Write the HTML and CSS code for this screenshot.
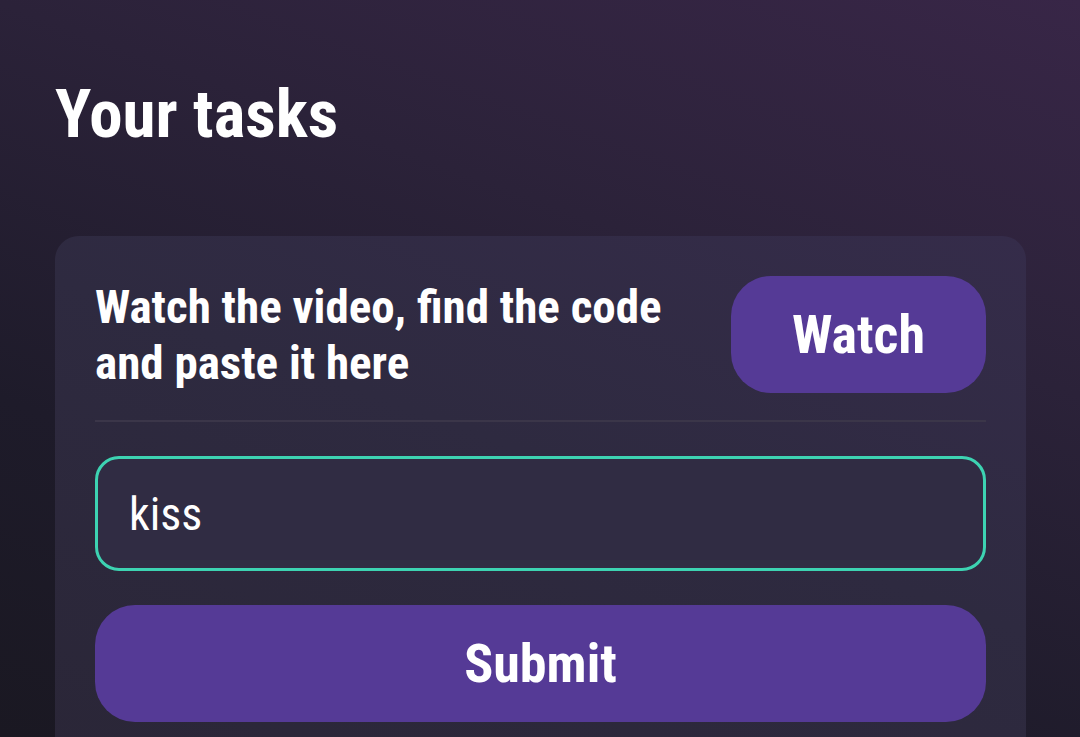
FILE: index.html
```html
<!DOCTYPE html>
<html lang="en">
  <head>
    <meta charset="UTF-8" />
    <meta name="viewport" content="width=device-width, initial-scale=1.0" />
    <title>Your tasks</title>
    <link rel="stylesheet" href="styles.css">
  </head>

  <body>
    <div class="page">
      <h1 class="page-title">Your tasks</h1>
      <div class="task-card">
        <div class="task-head">
          <div class="task-text">Watch the video, find the code and paste it here</div>
          <button class="btn watch-btn">Watch</button>
        </div>
        <div class="divider"></div>
        <input class="code-input" type="text" value="kiss" />
        <button class="btn submit-btn">Submit</button>
      </div>
    </div>
  </body>
</html>
```
FILE: styles.css
```css
html,
body {
  margin: 0;
  height: 100%;
}
body {
  font-family: "Roboto Condensed", Roboto, sans-serif;
  color: #ffffff;
  background: #1d1a28;
  background-image: linear-gradient(200deg, #382647 0%, #2b2239 35%, #1e1b2a 70%, #1a1822 100%);
  overflow: hidden;
}
.page {
  padding: 71px 54px 0 55px;
}
.page-title {
  margin: 0 0 79px 0;
  font-size: 67px;
  line-height: 86px;
  font-weight: 700;
}
.task-card {
  background: linear-gradient(200deg, #352c4a 0%, #2e2a40 45%, #2a2637 100%);
  border-radius: 24px;
  padding: 40px;
  display: flex;
  flex-direction: column;
}
.task-head {
  display: flex;
  align-items: center;
  justify-content: space-between;
}
.task-text {
  width: 600px;
  font-size: 47px;
  line-height: 56px;
  font-weight: 700;
}
.btn {
  font-family: "Roboto Condensed", Roboto, sans-serif;
  font-weight: 700;
  font-size: 54px;
  color: #ffffff;
  background-color: #553a96;
  border: none;
  border-radius: 40px;
  padding: 0;
}
.watch-btn {
  width: 255px;
  height: 117px;
}
.divider {
  height: 2px;
  background-color: #3b3649;
  margin: 27px 0 34px 0;
}
.code-input {
  box-sizing: border-box;
  height: 115px;
  width: 100%;
  border: 3px solid #3dd3b2;
  border-radius: 24px;
  background-color: #302c43;
  color: #ffffff;
  font-family: "Roboto Condensed", Roboto, sans-serif;
  font-size: 46px;
  padding: 0 31px;
  outline: none;
}
.submit-btn {
  margin-top: 34px;
  height: 117px;
  width: 100%;
}
```
